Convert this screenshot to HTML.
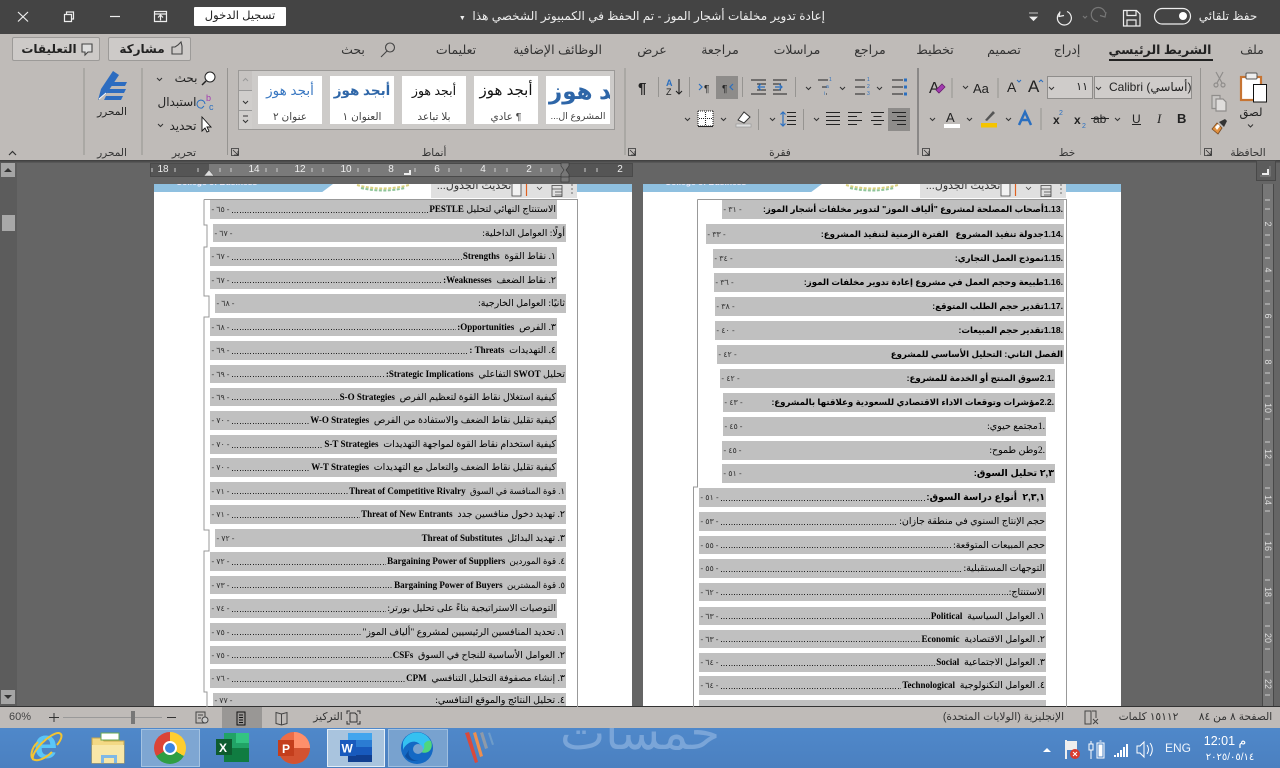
<!DOCTYPE html>
<html lang="ar"><head><meta charset="utf-8"><title>Word</title>
<style>
html,body{margin:0;padding:0;width:1280px;height:768px;overflow:hidden;background:#656565}
body{position:relative;font-family:"Liberation Sans","DejaVu Sans",sans-serif;font-size:11px;color:#222}
.a{position:absolute}
.c{position:absolute;text-align:center;white-space:nowrap;direction:rtl;line-height:14px}
.r{position:absolute;display:flex;direction:rtl;align-items:center;background:#c0c0c0;color:#000;white-space:nowrap;overflow:hidden;font-family:"Liberation Serif","DejaVu Sans",serif;font-size:9.5px;box-sizing:border-box;padding-right:1px}
.r b{font-size:9px;font-family:"Liberation Serif",serif}
.r.n{font-size:8.6px}
.r.h{font-family:"Liberation Sans","DejaVu Sans",sans-serif;font-weight:bold;font-size:8.6px}
.r.h.k{font-size:9.5px}
.r u{flex:1;height:1px;margin:5px 1px 0 1px;text-decoration:none}
.r u.d{background:repeating-linear-gradient(90deg,#222 0 1px,transparent 1px 2.6px)}
.r em{font-style:normal;font-weight:normal;width:21px;text-align:center;flex:none;color:#333;font-size:8px}
.card{position:absolute;top:76px;width:64px;height:48px;background:#fff;overflow:hidden}
.card div{position:absolute;left:0;right:0;text-align:center;white-space:nowrap;direction:rtl}
.card .p{top:5px;line-height:20px}
.card .l{top:34px;font-size:10.5px;color:#444;line-height:14px}
.tab{top:43px;font-size:12.5px;color:#333}
.lbl{top:146px;font-size:10.5px;color:#333}
.num{position:absolute;top:164px;color:#eee;font-size:10px;line-height:12px;width:16px;text-align:center}
.vn{position:absolute;left:1260px;width:16px;text-align:center;color:#ddd;font-size:9px;line-height:10px;transform:rotate(90deg)}
.tb{position:absolute;top:729px;height:38px;box-sizing:border-box}
.st{top:711px;font-size:10.7px;line-height:13px;color:#333}
</style></head><body>

<!-- title bar -->
<div class="a" style="left:0;top:0;width:1280px;height:34px;background:#444"></div>
<div class="c" style="left:194px;top:7px;width:92px;height:19px;background:#fff;line-height:19px;border-radius:1px;font-size:11.5px;color:#222">تسجيل الدخول</div>
<div class="c" style="left:440px;top:9px;width:385px;color:#eee;font-size:12px;text-align:right">إعادة تدوير مخلفات أشجار الموز - تم الحفظ في الكمبيوتر الشخصي هذا &nbsp;<span style="font-size:7px">▼</span></div>
<div class="c" style="left:1196px;top:9px;width:64px;color:#eee;font-size:12px">حفظ تلقائي</div>

<!-- ribbon -->
<div class="a" style="left:0;top:34px;width:1280px;height:126px;background:#bfbbb8"></div>
<div class="a" style="left:0;top:160px;width:1280px;height:3px;background:linear-gradient(#3d3d3d,#5c5c5c)"></div>

<div class="c tab" style="left:1236px;width:32px">ملف</div>
<div class="c tab" style="left:1100px;width:120px;font-weight:bold;color:#222;font-size:12.5px">الشريط الرئيسي</div>
<div class="a" style="left:1109px;top:59px;width:104px;height:2px;background:#222"></div>
<div class="c tab" style="left:1050px;width:34px">إدراج</div>
<div class="c tab" style="left:982px;width:44px">تصميم</div>
<div class="c tab" style="left:913px;width:44px">تخطيط</div>
<div class="c tab" style="left:850px;width:40px">مراجع</div>
<div class="c tab" style="left:767px;width:60px">مراسلات</div>
<div class="c tab" style="left:695px;width:50px">مراجعة</div>
<div class="c tab" style="left:635px;width:34px">عرض</div>
<div class="c tab" style="left:500px;width:115px">الوظائف الإضافية</div>
<div class="c tab" style="left:428px;width:56px">تعليمات</div>
<div class="c tab" style="left:338px;width:30px">بحث</div>

<div class="a" style="left:108px;top:37px;width:83px;height:24px;box-sizing:border-box;border:1px solid #9c9a98;border-radius:2px;background:#cdcac8"></div>
<div class="c" style="left:112px;top:42px;width:60px;font-weight:bold;font-size:12px;color:#222">مشاركة</div>
<div class="a" style="left:12px;top:37px;width:88px;height:24px;box-sizing:border-box;border:1px solid #9c9a98;border-radius:2px;background:#cdcac8"></div>
<div class="c" style="left:18px;top:42px;width:62px;font-weight:bold;font-size:12px;color:#222">التعليقات</div>

<!-- font boxes -->
<div class="a" style="left:1094px;top:76px;width:98px;height:23px;box-sizing:border-box;border:1px solid #8f8d8b;background:#cfccca;line-height:21px;padding-left:14px;font-size:12px;color:#222;white-space:nowrap;overflow:hidden">Calibri (<span dir="rtl">أساسي</span>)</div>
<div class="a" style="left:1047px;top:76px;width:46px;height:23px;box-sizing:border-box;border:1px solid #8f8d8b;background:#cfccca;line-height:21px;text-align:right;padding-right:4px;font-size:11px">١١</div>
<div class="a" style="left:716px;top:76px;width:22px;height:23px;background:#8e8c8a"></div>
<div class="a" style="left:888px;top:108px;width:22px;height:23px;background:#8e8c8a"></div>

<div class="c" style="left:1232px;top:106px;width:38px;font-size:11.5px">لصق</div>
<div class="c lbl" style="left:1226px;width:44px">الحافظة</div>
<div class="c lbl" style="left:1055px;width:24px">خط</div>
<div class="c lbl" style="left:764px;width:32px">فقرة</div>
<div class="c lbl" style="left:418px;width:32px">أنماط</div>
<div class="c lbl" style="left:168px;width:32px">تحرير</div>
<div class="c lbl" style="left:92px;width:40px">المحرر</div>
<div class="c" style="left:92px;top:105px;width:40px;font-size:10.5px">المحرر</div>
<div class="c" style="left:172px;top:71px;width:28px;font-size:12px">بحث</div>
<div class="c" style="left:154px;top:95px;width:46px;font-size:12px">استبدال</div>
<div class="c" style="left:167px;top:119px;width:32px;font-size:12px">تحديد</div>

<!-- gallery -->
<div class="a" style="left:238px;top:70px;width:377px;height:60px;background:#cdcbc9;box-sizing:border-box;border:1px solid #9b9997"></div>
<div class="a" style="left:239px;top:71px;width:13px;height:19px;background:#c6c3c1;border-bottom:1px solid #999"></div>
<div class="a" style="left:239px;top:91px;width:13px;height:19px;background:#d0cecc;border-bottom:1px solid #999"></div>
<div class="a" style="left:239px;top:111px;width:13px;height:18px;background:#d0cecc"></div>
<div class="card" style="left:258px"><div class="p" style="color:#3a78c2;font-size:13.5px">أبجد هوز</div><div class="l">عنوان ٢</div></div>
<div class="card" style="left:330px"><div class="p" style="color:#2e66a8;font-size:13.5px;font-weight:bold">أبجد هوز</div><div class="l">العنوان ١</div></div>
<div class="card" style="left:402px"><div class="p" style="color:#111;font-size:12.5px">أبجد هوز</div><div class="l">بلا تباعد</div></div>
<div class="card" style="left:474px"><div class="p" style="color:#111;font-size:15px">أبجد هوز</div><div class="l">¶ عادي</div></div>
<div class="card" style="left:546px"><div class="p" style="color:#2e66a8;font-size:23px;font-weight:bold;left:3px;right:auto;top:5px">أبجد هوز</div><div class="l" style="font-size:9.5px">المشروع ال...</div></div>

<!-- ruler -->
<div class="a" style="left:151px;top:164px;width:481px;height:12px;background:#555;box-shadow:0 0 0 1px #4a4a4a"></div>
<div class="a" style="left:209px;top:164px;width:356px;height:12px;background:#7a7a7a"></div>
<div class="num" style="left:155px">18</div><div class="num" style="left:246px">14</div><div class="num" style="left:292px">12</div><div class="num" style="left:338px">10</div><div class="num" style="left:383px">8</div><div class="num" style="left:429px">6</div><div class="num" style="left:475px">4</div><div class="num" style="left:521px">2</div><div class="num" style="left:612px">2</div>

<!-- vertical ruler -->
<div class="a" style="left:1262px;top:184px;width:10px;height:522px;background:#777;border:solid #484848;border-width:0 1px"></div>
<div class="vn" style="top:219px">2</div><div class="vn" style="top:265px">4</div><div class="vn" style="top:311px">6</div><div class="vn" style="top:357px">8</div><div class="vn" style="top:403px">10</div><div class="vn" style="top:449px">12</div><div class="vn" style="top:495px">14</div><div class="vn" style="top:541px">16</div><div class="vn" style="top:587px">18</div><div class="vn" style="top:633px">20</div><div class="vn" style="top:679px">22</div>
<div class="a" style="left:1256px;top:160px;width:20px;height:21px;box-sizing:border-box;border:1px solid #484848;background:#5c5c5c"></div>

<!-- scroll -->
<div class="a" style="left:0;top:163px;width:17px;height:543px;background:#5c5c5c"></div>
<div class="a" style="left:1px;top:163px;width:14px;height:14px;background:#a5a5a5"></div>
<div class="a" style="left:2px;top:215px;width:13px;height:16px;background:#a8a8a8"></div>
<div class="a" style="left:1px;top:690px;width:14px;height:14px;background:#a5a5a5"></div>

<!-- pages -->
<div class="a" style="left:154px;top:184px;width:478px;height:523px;background:#fff"></div>
<div class="a" style="left:643px;top:184px;width:478px;height:523px;background:#fff"></div>

<!-- header bands -->
<div class="a" style="left:154px;top:184px;width:179px;height:8px;background:#8fc0e0;clip-path:polygon(0 0,100% 0,94% 100%,0 100%)"></div>
<div class="a" style="left:577px;top:184px;width:55px;height:8px;background:#8fc0e0"></div>
<div class="a" style="left:176px;top:178px;width:90px;height:10px;overflow:hidden;color:#eef;font-size:8.5px;line-height:9px;font-weight:bold;clip-path:inset(6px 0 0 0)">College of Business</div>
<div class="a" style="left:431px;top:184px;width:146px;height:14px;background:#e0e0e0;overflow:hidden"></div>
<div class="a" style="left:643px;top:184px;width:179px;height:8px;background:#8fc0e0;clip-path:polygon(0 0,100% 0,94% 100%,0 100%)"></div>
<div class="a" style="left:1066px;top:184px;width:55px;height:8px;background:#8fc0e0"></div>
<div class="a" style="left:665px;top:178px;width:90px;height:10px;overflow:hidden;color:#eef;font-size:8.5px;line-height:9px;font-weight:bold;clip-path:inset(6px 0 0 0)">College of Business</div>
<div class="a" style="left:920px;top:184px;width:146px;height:14px;background:#e0e0e0;overflow:hidden"></div>
<div class="c" style="left:436px;top:179px;width:76px;font-size:11px;color:#333;height:19px;overflow:hidden;clip-path:inset(5px 0 0 0)">تحديث الجدول...</div>
<div class="c" style="left:925px;top:179px;width:76px;font-size:11px;color:#333;height:19px;overflow:hidden;clip-path:inset(5px 0 0 0)">تحديث الجدول...</div>

<!-- left TOC -->
<div class="r" style="left:210px;top:200px;width:347px;height:19px"><span>الاستنتاج النهائي لتحليل <b>PESTLE</b></span><u class="d"></u><em>- ٦٥ -</em></div>
<div class="r" style="left:213px;top:224px;width:353px;height:18px"><span>أولًا: العوامل الداخلية:</span><u></u><em>- ٦٧ -</em></div>
<div class="r" style="left:210px;top:247px;width:347px;height:19px"><span>١. نقاط القوة &nbsp;<b>Strengths</b></span><u class="d"></u><em>- ٦٧ -</em></div>
<div class="r" style="left:210px;top:271px;width:347px;height:18px"><span>٢. نقاط الضعف &nbsp;<b>Weaknesses:</b></span><u class="d"></u><em>- ٦٧ -</em></div>
<div class="r" style="left:215px;top:294px;width:351px;height:19px"><span>ثانيًا: العوامل الخارجية:</span><u></u><em>- ٦٨ -</em></div>
<div class="r" style="left:210px;top:318px;width:347px;height:18px"><span>٣. الفرص &nbsp;<b>Opportunities:</b></span><u class="d"></u><em>- ٦٨ -</em></div>
<div class="r" style="left:210px;top:341px;width:347px;height:19px"><span>٤. التهديدات &nbsp;<b>Threats :</b></span><u class="d"></u><em>- ٦٩ -</em></div>
<div class="r" style="left:210px;top:365px;width:356px;height:18px"><span>تحليل <b>SWOT</b> التفاعلي &nbsp;<b>Strategic Implications:</b></span><u class="d"></u><em>- ٦٩ -</em></div>
<div class="r" style="left:210px;top:388px;width:347px;height:18px"><span>كيفية استغلال نقاط القوة لتعظيم الفرص &nbsp;<b>S-O Strategies</b></span><u class="d"></u><em>- ٦٩ -</em></div>
<div class="r" style="left:210px;top:411px;width:347px;height:19px"><span>كيفية تقليل نقاط الضعف والاستفادة من الفرص &nbsp;<b>W-O Strategies</b></span><u class="d"></u><em>- ٧٠ -</em></div>
<div class="r" style="left:210px;top:435px;width:347px;height:19px"><span>كيفية استخدام نقاط القوة لمواجهة التهديدات &nbsp;<b>S-T Strategies</b></span><u class="d"></u><em>- ٧٠ -</em></div>
<div class="r" style="left:210px;top:458px;width:347px;height:19px"><span>كيفية تقليل نقاط الضعف والتعامل مع التهديدات &nbsp;<b>W-T Strategies</b></span><u class="d"></u><em>- ٧٠ -</em></div>
<div class="r n" style="left:210px;top:482px;width:356px;height:18px"><span>١. قوة المنافسة في السوق &nbsp;<b>Threat of Competitive Rivalry</b></span><u class="d"></u><em>- ٧١ -</em></div>
<div class="r" style="left:210px;top:505px;width:356px;height:19px"><span>٢. تهديد دخول منافسين جدد &nbsp;<b>Threat of New Entrants</b></span><u class="d"></u><em>- ٧١ -</em></div>
<div class="r" style="left:215px;top:529px;width:351px;height:18px"><span>٣. تهديد البدائل &nbsp;<b>Threat of Substitutes</b></span><u></u><em>- ٧٢ -</em></div>
<div class="r n" style="left:210px;top:552px;width:356px;height:19px"><span>٤. قوة الموردين &nbsp;<b>Bargaining Power of Suppliers</b></span><u class="d"></u><em>- ٧٢ -</em></div>
<div class="r n" style="left:210px;top:576px;width:356px;height:18px"><span>٥. قوة المشترين &nbsp;<b>Bargaining Power of Buyers</b></span><u class="d"></u><em>- ٧٣ -</em></div>
<div class="r" style="left:210px;top:599px;width:347px;height:19px"><span>التوصيات الاستراتيجية بناءً على تحليل بورتر:</span><u class="d"></u><em>- ٧٤ -</em></div>
<div class="r" style="left:210px;top:623px;width:356px;height:18px"><span>١. تحديد المنافسين الرئيسيين لمشروع "ألياف الموز"</span><u class="d"></u><em>- ٧٥ -</em></div>
<div class="r" style="left:210px;top:646px;width:356px;height:18px"><span>٢. العوامل الأساسية للنجاح في السوق &nbsp;<b>CSFs</b></span><u class="d"></u><em>- ٧٥ -</em></div>
<div class="r" style="left:210px;top:669px;width:356px;height:19px"><span>٣. إنشاء مصفوفة التحليل التنافسي &nbsp;<b>CPM</b></span><u class="d"></u><em>- ٧٦ -</em></div>
<div class="r" style="left:213px;top:693px;width:353px;height:14px"><span>٤. تحليل النتائج والموقع التنافسي:</span><u></u><em>- ٧٧ -</em></div>

<!-- right TOC -->
<div class="r h" style="left:722px;top:200px;width:342px;height:19px"><span>.1.13أصحاب المصلحة لمشروع "ألياف الموز" لتدوير مخلفات أشجار الموز:</span><u></u><em>- ٣١ -</em></div>
<div class="r h" style="left:706px;top:224px;width:358px;height:20px"><span>.1.14جدولة تنفيذ المشروع &nbsp; الفترة الزمنية لتنفيذ المشروع:</span><u></u><em>- ٣٣ -</em></div>
<div class="r h" style="left:713px;top:249px;width:351px;height:19px"><span>.1.15نموذج العمل التجاري:</span><u></u><em>- ٣٤ -</em></div>
<div class="r h" style="left:714px;top:273px;width:350px;height:19px"><span>.1.16طبيعة وحجم العمل في مشروع إعادة تدوير مخلفات الموز:</span><u></u><em>- ٣٦ -</em></div>
<div class="r h" style="left:715px;top:297px;width:349px;height:19px"><span>.1.17تقدير حجم الطلب المتوقع:</span><u></u><em>- ٣٨ -</em></div>
<div class="r h" style="left:715px;top:321px;width:349px;height:19px"><span>.1.18تقدير حجم المبيعات:</span><u></u><em>- ٤٠ -</em></div>
<div class="r h" style="left:717px;top:345px;width:347px;height:19px"><span>الفصل الثاني: التحليل الأساسي للمشروع</span><u></u><em>- ٤٢ -</em></div>
<div class="r h" style="left:720px;top:369px;width:335px;height:19px"><span>.2.1سوق المنتج أو الخدمة للمشروع:</span><u></u><em>- ٤٢ -</em></div>
<div class="r h" style="left:723px;top:393px;width:332px;height:19px"><span>.2.2مؤشرات وتوقعات الاداء الاقتصادي للسعودية وعلاقتها بالمشروع:</span><u></u><em>- ٤٣ -</em></div>
<div class="r" style="left:723px;top:417px;width:323px;height:19px"><span>.1مجتمع حيوي:</span><u></u><em>- ٤٥ -</em></div>
<div class="r" style="left:722px;top:441px;width:324px;height:19px"><span>.2وطن طموح:</span><u></u><em>- ٤٥ -</em></div>
<div class="r h k" style="left:722px;top:464px;width:333px;height:19px"><span>٢,٣ تحليل السوق:</span><u></u><em>- ٥١ -</em></div>
<div class="r h k" style="left:699px;top:488px;width:347px;height:19px"><span>٢,٣,١ &nbsp;أنواع دراسة السوق:</span><u class="d"></u><em>- ٥١ -</em></div>
<div class="r" style="left:699px;top:512px;width:347px;height:19px"><span>حجم الإنتاج السنوي في منطقة جازان:</span><u class="d"></u><em>- ٥٣ -</em></div>
<div class="r" style="left:699px;top:536px;width:347px;height:18px"><span>حجم المبيعات المتوقعة:</span><u class="d"></u><em>- ٥٥ -</em></div>
<div class="r" style="left:699px;top:559px;width:347px;height:19px"><span>التوجهات المستقبلية:</span><u class="d"></u><em>- ٥٥ -</em></div>
<div class="r" style="left:699px;top:583px;width:347px;height:18px"><span>الاستنتاج:</span><u class="d"></u><em>- ٦٢ -</em></div>
<div class="r" style="left:699px;top:607px;width:347px;height:18px"><span>١. العوامل السياسية &nbsp;<b>Political</b></span><u class="d"></u><em>- ٦٣ -</em></div>
<div class="r" style="left:699px;top:630px;width:347px;height:18px"><span>٢. العوامل الاقتصادية &nbsp;<b>Economic</b></span><u class="d"></u><em>- ٦٣ -</em></div>
<div class="r" style="left:699px;top:653px;width:347px;height:19px"><span>٣. العوامل الاجتماعية &nbsp;<b>Social</b></span><u class="d"></u><em>- ٦٤ -</em></div>
<div class="r" style="left:699px;top:676px;width:347px;height:19px"><span>٤. العوامل التكنولوجية &nbsp;<b>Technological</b></span><u class="d"></u><em>- ٦٤ -</em></div>
<div class="r" style="left:699px;top:700px;width:347px;height:7px"></div>

<!-- status bar -->
<div class="a" style="left:0;top:706px;width:1280px;height:1px;background:#333"></div>
<div class="a" style="left:0;top:707px;width:1280px;height:21px;background:#bfbbb8"></div>
<div class="a" style="left:222px;top:707px;width:40px;height:21px;background:#999795"></div>
<div class="a" style="left:9px;top:711px;font-size:11px;line-height:13px;color:#444">60%</div>
<div class="c st" style="left:310px;width:36px">التركيز</div>
<div class="c st" style="left:935px;width:137px">الإنجليزية (الولايات المتحدة)</div>
<div class="c st" style="left:1113px;width:71px">١٥١١٢ كلمات</div>
<div class="c st" style="left:1193px;width:85px">الصفحة ٨ من ٨٤</div>

<!-- taskbar -->
<div class="a" style="left:0;top:728px;width:1280px;height:40px;background:linear-gradient(#4f88ca,#4b80c0)"></div>
<div class="c" style="left:530px;top:714px;width:220px;font-size:48px;line-height:40px;color:#7aa5d8;height:36px;overflow:hidden;clip-path:inset(14px 0 0 0)">خمسات</div>
<div class="tb" style="left:141px;width:59px;background:#7ea6d2;border:1px solid #a4c3e2"></div>
<div class="tb" style="left:327px;width:58px;background:#a9c4de;border:1px solid #e4eef7"></div>
<div class="tb" style="left:388px;width:60px;background:#78a2cf;border:1px solid #a0bfdf"></div>
<div class="a" style="left:154px;top:732px;width:32px;height:32px;border-radius:50%;background:conic-gradient(#ffcd2e 0 120deg,#2f9e44 120deg 240deg,#db4437 240deg 360deg)"></div>
<div class="a" style="left:163px;top:741px;width:14px;height:14px;border-radius:50%;background:#3d85e0;border:2px solid #fff;box-sizing:border-box"></div>
<div class="a" style="left:34px;top:723px;font:bold 42px/42px 'Liberation Sans',sans-serif;color:#5ac6f7">e</div>
<div class="a" style="left:1165px;top:741px;font-size:12px;line-height:14px;color:#eef4fb">ENG</div>
<div class="c" style="left:1199px;top:734px;width:52px;font-size:12.5px;color:#fff">م 12:01</div>
<div class="c" style="left:1204px;top:751px;width:52px;font-size:10px;color:#fff;direction:ltr">٢٠٢٥/٠٥/١٤</div>

<!-- icons -->
<svg class="a" style="left:0;top:0" width="1280" height="768" viewBox="0 0 1280 768" fill="none">
<!-- title bar -->
<g stroke="#eee" stroke-width="1.2">
<path d="M18 12l10 9.5M28 12L18 21.5"/>
<path d="M64.5 14.5h7v7h-7zM66.5 14.5V12h7v7h-2"/>
<path d="M110 16.5h10"/>
<path d="M154.5 11.5h12v10h-12zM154.5 14h12M160.5 20.5v-5M158 17.5l2.5-2.5 2.5 2.5"/>
<path d="M1123.5 10.5h13l3.5 3.5v12h-16.5zM1127 10.5v5h9v-5M1127 26v-6h9v6"/>
<rect x="1154.5" y="8.5" width="36" height="15.5" rx="7.7"/>
<path d="M1060 11.5l-1 5 5-1"/><path d="M1060 12.5a7 7 0 1 0 7-1"/>
</g>
<circle cx="1183" cy="16" r="4" fill="#fff"/>
<g stroke="#777" stroke-width="1.2"><path d="M1106 12l-1 5-5-1.5"/><path d="M1105 12.5a7 7 0 1 0-7 9"/><path d="M1083 16l2 2 2-2"/></g>
<path d="M1029 13h9M1030 17h7l-3.5 3.5z" fill="#eee" stroke="#eee" stroke-width=".8"/>

<!-- tab search & buttons -->
<g stroke="#444" stroke-width="1.1">
<circle cx="390" cy="47.5" r="4.5"/><path d="M387 51l-6 6"/>
<path d="M172 54v-7h3l3-2 3-3 1 4v8z"/>
<path d="M82 44h10v8h-4l-3 3v-3h-3z" fill="#ddd"/>
</g>

<!-- dividers -->
<g stroke="#969491" stroke-width="1">
<path d="M84 68v87M142 68v87M227.5 68v87M625 68v87M1200.5 68v87"/>
<path d="M658.5 77v20M689.5 77v20M742.5 77v20M795.5 77v20M998 78v20M952 78v20M1041 108v22M758.5 109v21M803.5 109v21"/>
</g>
<path d="M918 68v87" stroke="#666" stroke-width="1.2"/>

<!-- small chevrons -->
<g stroke="#333" stroke-width="1">
<path d="M1248 124.5l2.5 2.5 2.5-2.5M1049 87l2.5 2.5 2.5-2.5M1096 87l2.5 2.5 2.5-2.5M963 86l2.5 2.5L968 86M930 118l2.5 2.5 2.5-2.5M967 118l2.5 2.5 2.5-2.5M1006 118l2.5 2.5 2.5-2.5M1115 118l2.5 2.5 2.5-2.5M806 87l2.5 2.5 2.5-2.5M840 87l2.5 2.5 2.5-2.5M877 87l2.5 2.5 2.5-2.5M814 118l2.5 2.5 2.5-2.5M770 118l2.5 2.5 2.5-2.5M721 118l2.5 2.5 2.5-2.5M685 118l2.5 2.5 2.5-2.5M157 78l2.5 2.5 2.5-2.5M158 124l2.5 2.5 2.5-2.5"/>
<path d="M9 155l3.5-3.5 3.5 3.5" stroke-width="1.2"/>
<path d="M243 101l2.5 2.5 2.5-2.5M243 120l2.5 2.5 2.5-2.5M243 116h5"/>
<path d="M243 81l2.5-2.5 2.5 2.5" stroke="#999"/>
<!-- launchers -->
<path d="M231.5 148.5h7v7h-7zM233 150l5 5M238 151v4h-4" stroke-width=".8"/>
<path d="M628.5 148.5h7v7h-7zM630 150l5 5M635 151v4h-4" stroke-width=".8"/>
<path d="M922.5 148.5h7v7h-7zM924 150l5 5M929 151v4h-4" stroke-width=".8"/>
<path d="M1204.5 148.5h7v7h-7zM1206 150l5 5M1211 151v4h-4" stroke-width=".8"/>
</g>

<!-- paste -->
<rect x="1241" y="77" width="20" height="23" fill="#fff" stroke="#c77432" stroke-width="2.2"/>
<rect x="1246" y="73" width="11" height="6" rx="1" fill="#eee" stroke="#555"/>
<rect x="1253.5" y="84.5" width="13" height="17.5" fill="#fff" stroke="#111"/>
<!-- cut/copy/painter -->
<g stroke="#8f8d8b" stroke-width="1.2"><path d="M1216 72l6 11M1223 72l-6 11"/><circle cx="1216" cy="85" r="2"/><circle cx="1223" cy="85" r="2"/>
<path d="M1212 95.5h8v13h-8z" fill="#c9c7c5"/><path d="M1216 99h7l3 3v9h-10z" fill="#dfdddb"/></g>
<path d="M1212 129l5-6 5 5-4 6z" fill="#e0903f" stroke="#7a4a20" stroke-width=".8"/><path d="M1215 127l3-3 2 2-3 4z" fill="#fff"/><path d="M1219 122l6-3 2 2-3 6z" fill="#333"/>

<!-- font group glyphs as text -->
<g font-family="Liberation Sans,sans-serif" fill="#222">
<text x="1028" y="92" font-size="17">A</text><text x="1007" y="92" font-size="14">A</text>
<text x="973" y="93" font-size="13">Aa</text>
<text x="929" y="93" font-size="16">A</text>
<text x="1177" y="123" font-size="13" font-weight="bold">B</text>
<text x="1157" y="123" font-size="13" font-style="italic" font-family="Liberation Serif,serif">I</text>
<text x="1132" y="123" font-size="12">U</text>
<text x="1093" y="123" font-size="12">ab</text>
<text x="1074" y="124" font-size="12" font-weight="bold">x</text><text x="1082" y="128" font-size="7" fill="#2a6fc0">2</text>
<text x="1053" y="124" font-size="12" font-weight="bold">x</text><text x="1059" y="115" font-size="7" fill="#2a6fc0">2</text>
<text x="946" y="122" font-size="13">A</text>
<text x="638" y="93" font-size="15" font-weight="bold">¶</text>
<text x="666" y="86" font-size="9" fill="#2a6fc0" font-weight="bold">A</text><text x="666" y="95" font-size="9">Z</text>
<text x="704" y="92" font-size="10">¶</text>
<text x="722" y="92" font-size="10">¶</text>
</g>
<path d="M1132 124.5h9M1091 118.5h18" stroke="#222"/>
<path d="M1017 80l2 2 2-2M1039 82l2-2 2 2" stroke="#2a6fc0"/>
<path d="M936 90l6-6 3 3-6 6z" fill="#a23bb0" stroke="#6a2070" stroke-width=".8"/>
<path d="M1019 125l6-13 6 13M1021.5 120h7" stroke="#2a6fc0" stroke-width="2.5"/>
<rect x="944" y="124" width="16" height="4" fill="#fff"/>
<rect x="981" y="123" width="16" height="4.5" fill="#f5c400"/>
<path d="M985 120l8-9 2 2-8 8z" fill="#555"/>

<!-- para glyphs -->
<g stroke="#222" stroke-width="1.1">
<path d="M892 80h11M892 87h11M892 94h11M855 80h10M855 87h10M855 94h10M818 80h10M822 87h5M826 94h1"/>
<path d="M751 80h15M757 84h9M757 90h9M751 94h15M773 80h14M773 84h8M773 90h8M773 94h14"/>
<path d="M679 79v15M676 91l3 3 3-3"/>
<path d="M826 112.5h14M826 116.5h14M826 120.5h14M826 124.5h14"/>
<path d="M848 112.5h14M848 116.5h9M848 120.5h14M848 124.5h9"/>
<path d="M871 112.5h13M873.5 116.5h8M871 120.5h13M873.5 124.5h8"/>
<path d="M892 112.5h14M897 116.5h9M892 120.5h14M897 124.5h9"/>
<path d="M787 112.5h9M787 116.5h9M787 120.5h9M787 124.5h9"/>
<rect x="698" y="111" width="15" height="15" fill="#fff" stroke="none"/>
<path d="M698 111h15M698 126h15M698 111v15M713 111v15M705.5 112v14M699 118.5h13" stroke-dasharray="1 1"/><path d="M698 126.5h15"/>
</g>
<g fill="#2a6fc0"><rect x="904" y="78.5" width="3" height="3"/><rect x="904" y="85.5" width="3" height="3"/><rect x="904" y="92.5" width="3" height="3"/>
<text x="867" y="81" font-size="5" font-family="Liberation Sans">1</text><text x="867" y="88" font-size="5" font-family="Liberation Sans">2</text><text x="867" y="95" font-size="5" font-family="Liberation Sans">3</text>
<text x="829" y="81" font-size="5" font-family="Liberation Sans">1</text><text x="826" y="88" font-size="5" font-family="Liberation Sans">a</text><text x="824" y="95" font-size="5" font-family="Liberation Sans">i</text></g>
<path d="M765 87h-7M761 84l-3 3 3 3M775 87h7M779 84l3 3-3 3M699 84l3 3-3 3M733 84l-3 3 3 3" stroke="#2a6fc0" stroke-width="1.2"/>
<path d="M783 112v14M780.5 114.5l2.5-2.5 2.5 2.5M780.5 123.5l2.5 2.5 2.5-2.5" stroke="#2a6fc0" stroke-width="1.2"/>
<path d="M738 120l6-8 6 5-6 6z" fill="#fff" stroke="#333"/><rect x="736" y="124" width="15" height="3" fill="#ddd" stroke="#999" stroke-width=".7"/>

<!-- editor pen -->
<path d="M98 100l3-11 12-18 6 4-12 18z" fill="#2c6cc0"/><path d="M99 99l7-6" stroke="#fff"/><path d="M113 82h14l-2 4h-14zM109 89h17l-2 4h-17zM106 96h17l-2 4h-17z" fill="#2c6cc0"/>
<!-- editing -->
<circle cx="210" cy="77" r="5" fill="#fff" stroke="#222"/><path d="M206 81l-4 4" stroke="#222" stroke-width="1.5"/>
<text x="206" y="101" font-size="9" fill="#a23bb0" font-family="Liberation Sans">b</text><text x="209" y="110" font-size="9" fill="#2a6fc0" font-family="Liberation Sans">c</text><path d="M205 104a4 4 0 1 0-3 4l2-2" stroke="#2a6fc0"/>
<path d="M202 117v14l3-3 2 4 2-1-2-4h4z" fill="#fff" stroke="#111" stroke-width=".9"/>

<!-- ruler marks -->
<g stroke="#ccc" stroke-width="1">
<path d="M152 168v4M175 168v4M198 168v4M220 168v4M231 168v4M266 168v4M277 168v4M312 168v4M323 168v4M358 168v4M369 168v4M415 168v4M449 168v4M461 168v4M495 168v4M507 168v4M541 168v4M552 168v4M585 168v4M597 168v4"/>
<path d="M1265 200h5M1265 209h5M1265 235h5M1265 245h5M1265 258h5M1265 281h5M1265 291h5M1265 304h5M1265 327h5M1265 337h5M1265 350h5M1265 373h5M1265 383h5M1265 396h5M1265 419h5M1265 442h5M1265 465h5M1265 488h5M1265 511h5M1265 534h5M1265 557h5M1265 580h5M1265 603h5M1265 626h5M1265 649h5M1265 672h5M1265 695h5"/>
</g>
<path d="M204 176l5-6 5 6z" fill="#ddd" stroke="#555" stroke-width=".5"/>
<path d="M404 174h6v-4" stroke="#eee" stroke-width="2"/>
<path d="M561 163h8v3l-3 4 3 4v3h-8v-3l3-4-3-4z" fill="#777" stroke="#333" stroke-width=".6"/><rect x="561" y="177" width="8" height="5" fill="#777" stroke="#333" stroke-width=".6"/>
<path d="M1260 176h10v-10" stroke="#888" stroke-width="1"/><path d="M1262 175h7v-6h-2v4h-5z" fill="#eee"/>
<path d="M4 172l4-4 4 4zM4 695l4 4 4-4z" fill="#333"/>

<!-- header logo arcs -->
<g stroke-width="2" stroke-dasharray="3 1.5">
<path d="M357 185q26 7 52 0" stroke="#d9cf7f"/><path d="M361 188q22 5 44 0" stroke="#8fc59a"/>
<path d="M846 185q26 7 52 0" stroke="#d9cf7f"/><path d="M850 188q22 5 44 0" stroke="#8fc59a"/>
</g>

<!-- toc borders -->
<path d="M204 199.5H577.5V707M204 199.5V225h3v22h-3v49h5v21h-5v213h5v21h-5v141h3v15" stroke="#999"/>
<path d="M697.5 199.5H1066.5V707M697.5 199.5V487h-4v220" stroke="#999"/>

<!-- table tab icons -->
<g stroke="#444" stroke-width=".8">
<path d="M512 184v12h9v-12" fill="#f2f2f2"/><path d="M552 185.5h10v11h-10zM552 189h10M555 192h7M555 195h7"/>
<path d="M537 187l2.5 2.5 2.5-2.5M571 185h2M571 189h2M571 193h2"/>
<path d="M1001 184v12h9v-12" fill="#f2f2f2"/><path d="M1041 185.5h10v11h-10zM1041 189h10M1044 192h7M1044 195h7"/>
<path d="M1026 187l2.5 2.5 2.5-2.5M1060 185h2M1060 189h2M1060 193h2"/>
</g>
<path d="M526.5 184v12" stroke="#e06020" stroke-width="1.2"/><path d="M1015.5 184v12" stroke="#e06020" stroke-width="1.2"/>

<!-- status icons -->
<g stroke="#444" stroke-width="1">
<path d="M49 717.5h10M54 713v9M167 717.5h9" stroke="#333"/>
<path d="M63 717.5h99" stroke="#999"/><rect x="131" y="711" width="4" height="13" fill="#777" stroke="none"/>
<path d="M196 712h9v11h-9zM198 715h5M198 718h3"/><circle cx="205" cy="720" r="3" fill="#ccc"/>
<path d="M237 712h8v13h-8zM239 715h4M239 717.5h4M239 720h4M239 722.5h4" stroke="#111"/>
<path d="M276 712.5l5.5 1.5 5.5-1.5v11l-5.5 1.5-5.5-1.5zM281.5 714v11"/>
<path d="M347 714v-3h3M347 721v3h3M360 714v-3h-3M360 721v3h-3M350 713h5l2 2v7h-7z" stroke="#333"/>
<path d="M1085 711h6v13h-6zM1092 711h4v7"/><path d="M1093 719l5 5M1098 719l-5 5"/>
</g>

<!-- taskbar icons -->
<path d="M33 760c-3-8 18-28 26-27 4 1 3 6-2 12M38 742c-7 6-9 17-3 18 4 1 11-2 17-8" stroke="#f2c433" stroke-width="2"/>
<path d="M92 738h9l3 3h20v22H92z" fill="#f3d985" stroke="#c9a74a"/><rect x="92" y="745" width="32" height="18" fill="#f8e7a8"/><path d="M101 755h16v8h-3v-5h-10v5h-3z" fill="#7fb8e6"/><rect x="101" y="733" width="18" height="7" fill="#fff" stroke="#6aa84f"/>
<!-- excel -->
<path d="M224 733h25v29h-25z" fill="#21a366"/><path d="M236 733h13v10h-13z" fill="#33c481"/><path d="M224 748h25v14h-25z" fill="#107c41"/>
<rect x="216" y="739" width="16" height="16" fill="#0e5c2f"/><text x="219" y="752" font-size="12" font-weight="bold" fill="#fff" font-family="Liberation Sans">X</text>
<!-- ppt -->
<circle cx="294" cy="748" r="16" fill="#ed6c47"/><path d="M294 732a16 16 0 0 1 16 16h-16z" fill="#ff8f6b"/><path d="M278 748a16 16 0 0 0 32 0z" fill="#d35230"/>
<rect x="278" y="740" width="16" height="16" fill="#c43e1c"/><text x="282" y="753" font-size="12" font-weight="bold" fill="#fff" font-family="Liberation Sans">P</text>
<!-- word -->
<path d="M348 733h24v29h-24z" fill="#2b7cd3"/><path d="M348 733h24v7h-24z" fill="#41a5ee"/><path d="M348 747h24v8h-24z" fill="#185abd"/><path d="M348 755h24v7h-24z" fill="#103f91"/>
<rect x="340" y="740" width="16" height="16" fill="#185abd"/><text x="341.5" y="752.5" font-size="12" font-weight="bold" fill="#fff" font-family="Liberation Sans">W</text>
<!-- edge -->
<circle cx="417" cy="748" r="16" fill="#1469c4"/><path d="M403 742a15 15 0 0 1 28 0c2 8-6 12-11 9 4-7-5-12-11-8-3 2-5 4-6 7z" fill="#35c1f1"/><path d="M431 741c3 8-3 14-10 11 3-2 4-5 3-8 2-3 5-4 7-3z" fill="#4fd67e"/><path d="M409 750a8 8 0 0 0 10 10c-5 2-11 1-14-4z" fill="#0c4fa0"/><circle cx="418" cy="749" r="5" fill="#78a2cf"/>
<!-- bars -->
<path d="M465 733l4-1 9 30-3 1z" fill="#d94a3d"/><path d="M473 733l3-1 7 24-3 1z" fill="#ef8f4e"/><path d="M480 733l3-1 5 16-3 1z" fill="#8f9aa8"/><path d="M488 733l2-.5 4 12-2 .5z" fill="#6e9cc9"/>
<!-- tray -->
<path d="M1043 752l4-4 4 4z" fill="#fff"/>
<path d="M1065 740h2v19h-2z" fill="#eee"/><path d="M1067 741h10v9h-10z" fill="#eee"/><circle cx="1075" cy="754" r="5" fill="#d83b2f"/><path d="M1073 752l4 4M1077 752l-4 4" stroke="#fff"/>
<g stroke="#fff" stroke-width="1"><rect x="1089" y="744" width="4" height="6"/><path d="M1091 741v3M1091 750v9"/><rect x="1097" y="743" width="7" height="15"/><rect x="1099" y="745" width="3" height="11" fill="#fff"/><path d="M1099.5 741h2"/></g>
<path d="M1114 757h2v-2h-2zM1117 757h2v-4h-2zM1120 757h2v-7h-2zM1123 757h2v-10h-2zM1126 757h2v-13h-2z" fill="#fff"/>
<path d="M1137 746h3l4-4v15l-4-4h-3z" stroke="#fff"/><path d="M1147 745c2 3 2 6 0 9M1150 743c3 4 3 9 0 13" stroke="#fff"/>
</svg>
</body></html>
